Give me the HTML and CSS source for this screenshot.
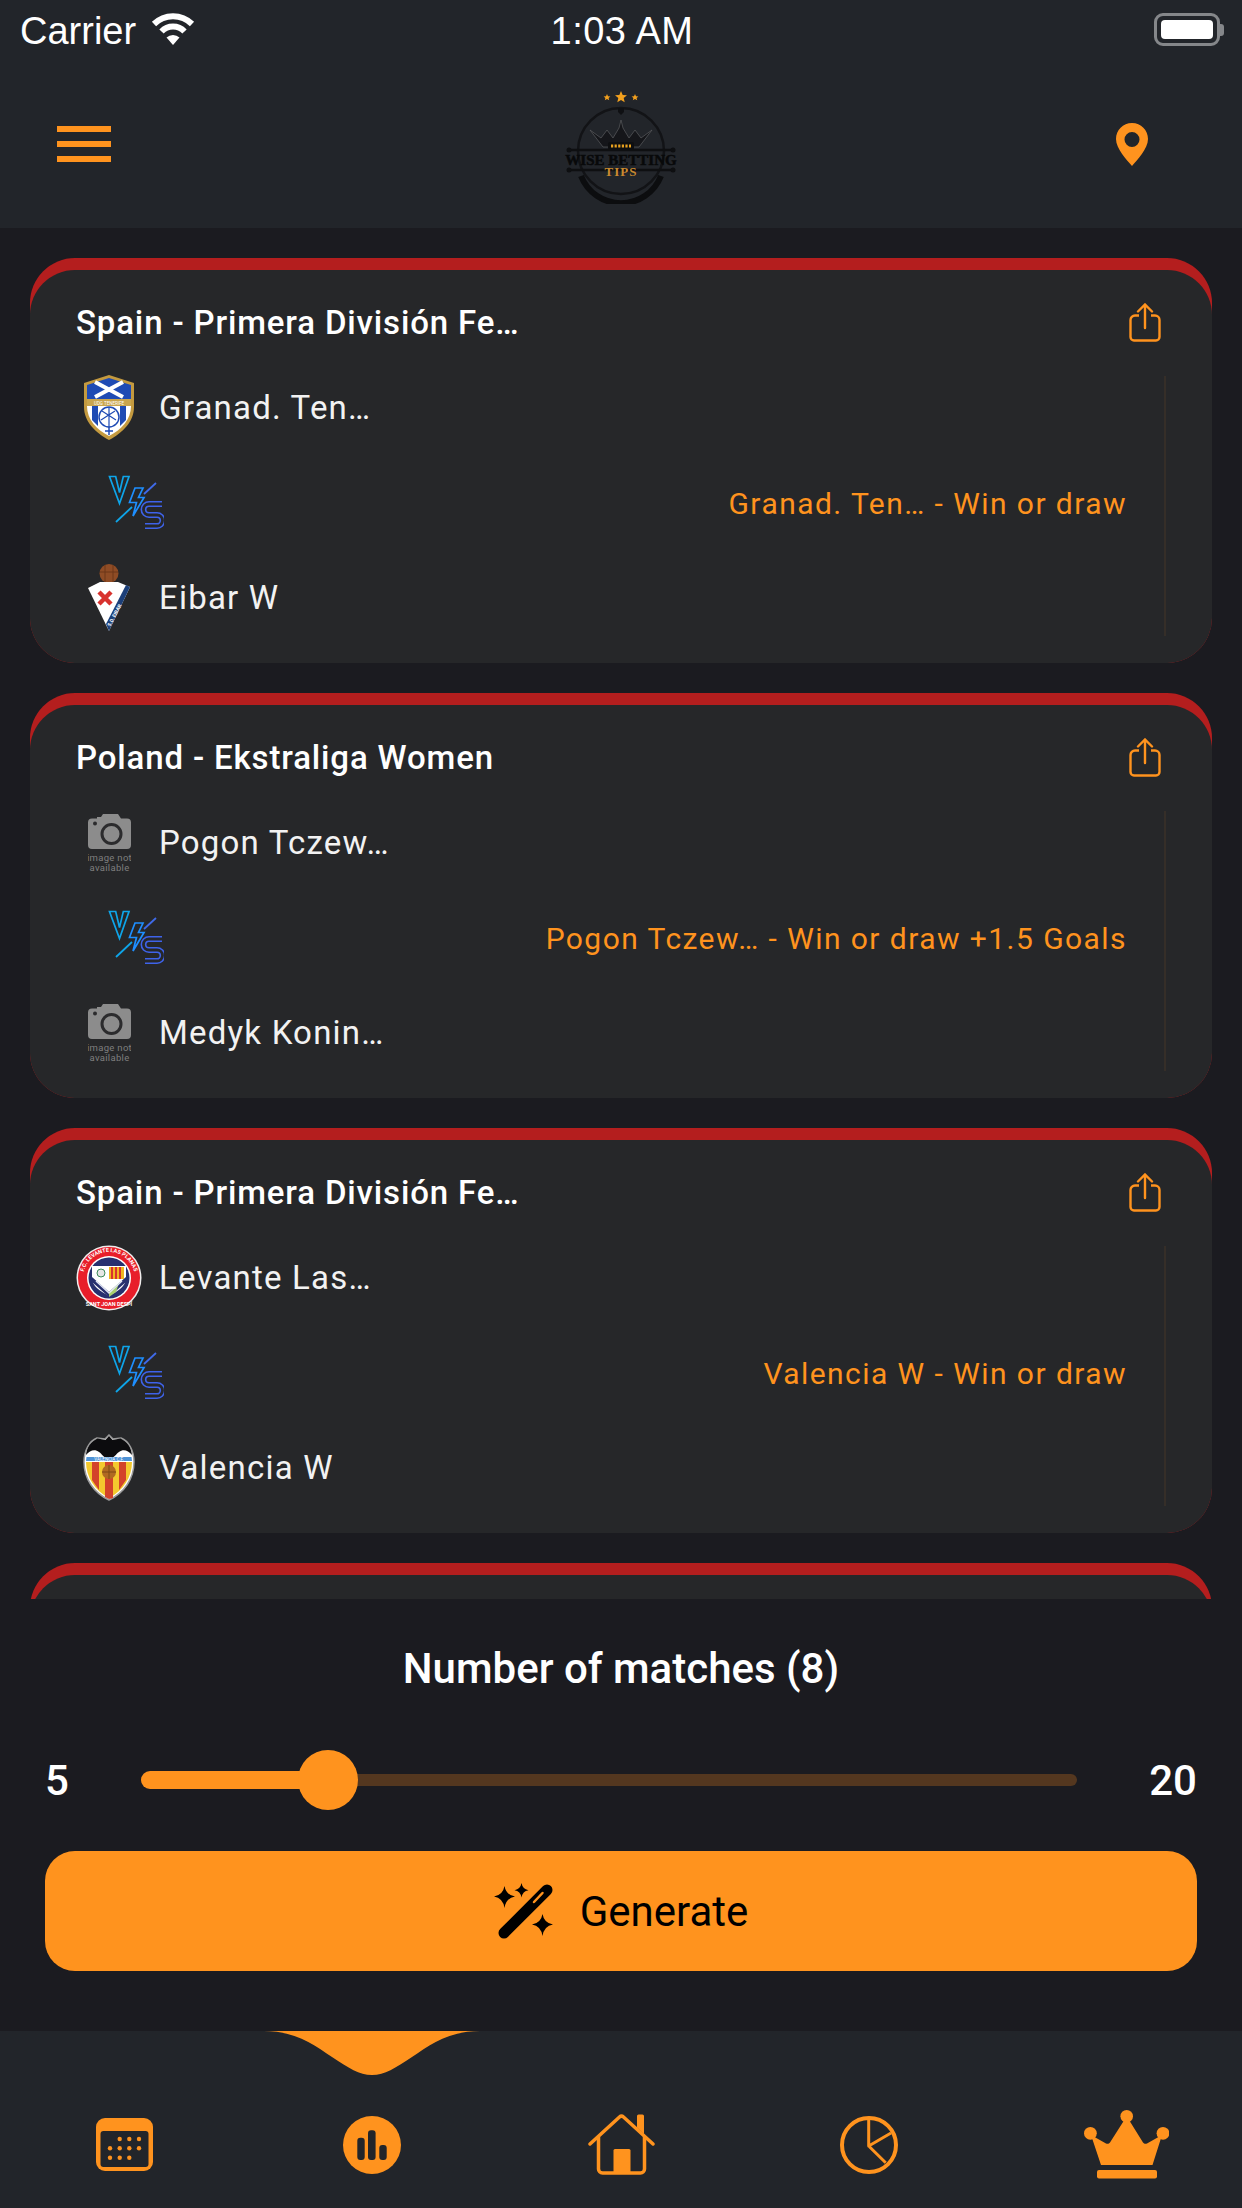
FILE: index.html
```html
<!DOCTYPE html>
<html lang="en">
  <head>
    <meta charset="UTF-8" />
    <meta name="viewport" content="width=device-width, initial-scale=1.0" />
    <title>Wise Betting Tips</title>
    <link rel="stylesheet" href="styles.css">
  </head>
  <body>
    <!-- Shared icons -->
    <svg class="defs" width="0" height="0">
      <symbol id="vs" viewBox="0 0 56 55">
        <path d="M1.500 1.500h6.200l3.800 16 3.800-16h5.700L11.500 28.500z" fill="none" stroke="#0ea5e9" stroke-width="1.700" />
        <path d="M27 13h8l-4.500 9.500h5.500L25 41l3.500-13.500H21.500z" fill="none" stroke="#1e8fff" stroke-width="1.700" />
        <path d="M36 19L48 8" stroke="#3f6ae8" stroke-width="1.800" />
        <path d="M8 47L24 32" stroke="#0ea5e9" stroke-width="1.800" />
        <path d="M54 29H41a5.500 5.500 0 0 0 0 11h8a5.500 5.500 0 0 1 0 11H37" fill="none" stroke="#3e63ea" stroke-width="6" />
        <path d="M54 29H41a5.500 5.500 0 0 0 0 11h8a5.500 5.500 0 0 1 0 11H37" fill="none" stroke="#262729" stroke-width="2.800" />
      </symbol>
      <symbol id="share" viewBox="0 0 32 39">
        <path d="M10 12.500H6a4.500 4.500 0 0 0-4.500 4.500v17A3.500 3.500 0 0 0 5 37.500h22a3.500 3.500 0 0 0 3.500-3.500V17a4.500 4.500 0 0 0-4.500-4.500h-4" fill="none" stroke="#ff931e" stroke-width="2.400" />
        <path d="M16 25V2M9 8.500L16 1.500l7 7" fill="none" stroke="#ff931e" stroke-width="2.400" stroke-linecap="round" />
      </symbol>
      <symbol id="camera" viewBox="0 0 43 36">
        <path d="M4 4.500h5V3h4l2-3h15l3 4.500h6a4 4 0 0 1 4 4V31a4 4 0 0 1-4 4H4a4 4 0 0 1-4-4V8.500a4 4 0 0 1 4-4z" fill="#8c8c8c" />
        <circle cx="23.500" cy="20" r="9.500" fill="#8c8c8c" stroke="#2b2b2d" stroke-width="3" />
        <circle cx="7" cy="9.500" r="2" fill="#2b2b2d" />
      </symbol>
    </svg>

    <header class="top">
      <div class="status-bar">
        <div class="status-left">
          <span>Carrier</span>
          <svg class="wifi" width="44" height="33" viewBox="0 0 44 33">
            <path d="M3 12A27 27 0 0 1 41 12" fill="none" stroke="#fff" stroke-width="6" />
            <path d="M10.500 19.500A16 16 0 0 1 33.500 19.500" fill="none" stroke="#fff" stroke-width="6" />
            <path d="M15.500 25.500A9.500 9.500 0 0 1 28.500 25.500L22 33z" fill="#fff" />
          </svg>
        </div>
        <div class="status-time">1:03 AM</div>
        <div class="battery">
          <div class="battery-body"><div class="battery-level"></div></div>
          <div class="battery-nub"></div>
        </div>
      </div>
      <div class="nav">
        <div class="burger"><span></span><span></span><span></span></div>
        <svg class="logo" width="120" height="120" viewBox="0 0 120 120">
          <path d="M60 7l1.700 4 4.300.3-3.300 2.800 1 4.200-3.700-2.300-3.700 2.300 1-4.200-3.300-2.800 4.300-.3z" fill="#f2a01e" />
          <path d="M46 10l1 2.200 2.400.2-1.800 1.500.6 2.300-2.200-1.200-2.200 1.200.6-2.300-1.800-1.500 2.400-.2zM74 10l1 2.200 2.400.2-1.800 1.500.6 2.300-2.200-1.200-2.200 1.200.6-2.300-1.800-1.500 2.400-.2z" fill="#f2a01e" />
          <circle cx="60" cy="67" r="43" fill="none" stroke="#121316" stroke-width="2.500" />
          <path d="M20 92a43 43 0 0 0 80 0" fill="none" stroke="#0c0d0f" stroke-width="6" />
          <path d="M57 24h6v4l-3 3-3-3z" fill="#0f1013" />
          <path d="M29 46l13 17h36l13-17-11 8-6-8-6 8-6-10-2-8-2 8-6 10-6-8-6 8z" fill="#15161a" stroke="#5a5b5f" stroke-width=".7" />
          <rect x="47" y="58" width="26" height="8" rx="2" fill="#0e0f11" />
          <path d="M50 62h20" stroke="#e8a11f" stroke-width="3" stroke-dasharray="2.200 1.400" />
          <path d="M8 66h104M8 86h104" stroke="#0e0f11" stroke-width="2.500" />
          <circle cx="8" cy="66" r="2.500" fill="#0e0f11" />
          <circle cx="112" cy="66" r="2.500" fill="#0e0f11" />
          <circle cx="8" cy="86" r="2.500" fill="#0e0f11" />
          <circle cx="112" cy="86" r="2.500" fill="#0e0f11" />
          <text class="logo-name" x="60" y="81">WISE BETTING</text>
          <text class="logo-tips" x="60" y="92">TIPS</text>
        </svg>
        <svg class="pin" width="32" height="43" viewBox="0 0 32 43">
          <path fill-rule="evenodd" d="M16 0C7 0 0 7 0 16c0 10 11 21 16 27 5-6 16-17 16-27C32 7 25 0 16 0zm0 9a7.500 7.500 0 1 1 0 15 7.500 7.500 0 0 1 0-15z" fill="#ff931e" />
        </svg>
      </div>
    </header>

    <main class="matches">
      <!-- Match 1 -->
      <section class="card">
        <div class="card-body">
          <div class="card-head">
            <div class="league">Spain - Primera División Fe…</div>
            <svg class="share" width="32" height="39"><use href="#share" /></svg>
          </div>
          <div class="match">
            <div class="teams">
              <div class="team">
                <div class="crest">
                  <svg width="50" height="65" viewBox="0 0 50 65">
                    <path d="M25 0l25 8v24c0 15-12 26-25 33C12 58 0 47 0 32V8z" fill="#c49a3f" />
                    <path d="M25 3L3 10v14h44V10z" fill="#1f4bb4" />
                    <path d="M11 7l28 15M39 7L11 22" stroke="#fff" stroke-width="4" />
                    <path d="M3 24h44v7H3z" fill="#c9a54d" />
                    <text class="crest-text" x="25" y="29.500">UDG TENERIFE</text>
                    <path d="M3 31h44c0 14-10 24-22 30C13 55 3 45 3 31z" fill="#fff" />
                    <path d="M8 31h6v20l-6-6zM36 31h6v14l-6 6z" fill="#1f4bb4" />
                    <circle cx="25" cy="42" r="10" fill="#fff" stroke="#1f4bb4" stroke-width="1.500" />
                    <path d="M25 32v20M18 36l14 9M17 45l14-9" stroke="#1f4bb4" stroke-width="1.200" />
                    <path d="M25 52v8M21 56h8" stroke="#1f4bb4" stroke-width="1.500" />
                  </svg>
                </div>
                <span class="team-name">Granad. Ten…</span>
              </div>
              <div class="team">
                <div class="crest crest-vs"><svg width="56" height="55"><use href="#vs" /></svg></div>
              </div>
              <div class="team">
                <div class="crest">
                  <svg width="43" height="67" viewBox="0 0 43 67">
                    <circle cx="21" cy="9.500" r="9.500" fill="#8f4c25" />
                    <path d="M17 1v17M25 1v17M12 8h18" stroke="#6c3618" stroke-width="1" />
                    <path d="M0 24L12 18h18l12 5-21 44z" fill="#fff" />
                    <path d="M38 21l4 2-21 44-3-7z" fill="#1c3f78" />
                    <path d="M11 28l12 12M23 28L11 40" stroke="#d8322e" stroke-width="4.500" />
                    <text class="crest-text crest-text-eibar" transform="translate(28 52) rotate(-62)">S.D. EIBAR</text>
                  </svg>
                </div>
                <span class="team-name">Eibar W</span>
              </div>
            </div>
            <div class="pick">Granad. Ten… - Win or draw</div>
          </div>
        </div>
      </section>

      <!-- Match 2 -->
      <section class="card">
        <div class="card-body">
          <div class="card-head">
            <div class="league">Poland - Ekstraliga Women</div>
            <svg class="share" width="32" height="39"><use href="#share" /></svg>
          </div>
          <div class="match">
            <div class="teams">
              <div class="team">
                <div class="crest">
                  <svg width="43" height="58" viewBox="0 0 43 58">
                    <use href="#camera" width="43" height="36" />
                    <text class="no-image-text" x="21.500" y="47">image not</text>
                    <text class="no-image-text" x="21.500" y="57">available</text>
                  </svg>
                </div>
                <span class="team-name">Pogon Tczew…</span>
              </div>
              <div class="team">
                <div class="crest crest-vs"><svg width="56" height="55"><use href="#vs" /></svg></div>
              </div>
              <div class="team">
                <div class="crest">
                  <svg width="43" height="58" viewBox="0 0 43 58">
                    <use href="#camera" width="43" height="36" />
                    <text class="no-image-text" x="21.500" y="47">image not</text>
                    <text class="no-image-text" x="21.500" y="57">available</text>
                  </svg>
                </div>
                <span class="team-name">Medyk Konin…</span>
              </div>
            </div>
            <div class="pick">Pogon Tczew… - Win or draw +1.5 Goals</div>
          </div>
        </div>
      </section>

      <!-- Match 3 -->
      <section class="card">
        <div class="card-body">
          <div class="card-head">
            <div class="league">Spain - Primera División Fe…</div>
            <svg class="share" width="32" height="39"><use href="#share" /></svg>
          </div>
          <div class="match">
            <div class="teams">
              <div class="team">
                <div class="crest">
                  <svg width="66" height="66" viewBox="0 0 66 66">
                    <circle cx="33" cy="33" r="32.500" fill="#f0eded" />
                    <circle cx="33" cy="33" r="31" fill="#e81e2a" />
                    <circle cx="33" cy="33" r="22" fill="#fff" />
                    <circle cx="33" cy="33" r="20.500" fill="#27306f" />
                    <path id="levante-arc" d="M7 33a26 26 0 0 1 52 0" fill="none" />
                    <text class="crest-text crest-text-levante"><textPath href="#levante-arc" startOffset="50%">F.C. LEVANTE LAS PLANAS</textPath></text>
                    <text class="crest-text crest-text-levante" x="33" y="61">SANT JOAN DESPÍ</text>
                    <path d="M16 21h34v12c0 8-8 13-17 18-9-5-17-10-17-18z" fill="#fff" />
                    <path d="M33 22h15v12H33z" fill="#f2b51f" />
                    <path d="M36 22v12M40 22v12M44 22v12" stroke="#d8322e" stroke-width="2" />
                    <circle cx="25" cy="28" r="4" fill="#e6e6e6" stroke="#3d8a5a" stroke-width="1" />
                    <path d="M16 32l17 15 17-15v5L33 52 16 37z" fill="#27306f" />
                    <path d="M33 47l10-9-3 9-7 5z" fill="#a7cf6f" />
                    <path d="M20 36l13 12 13-12" fill="none" stroke="#dfe4f2" stroke-width="1.500" />
                  </svg>
                </div>
                <span class="team-name">Levante Las…</span>
              </div>
              <div class="team">
                <div class="crest crest-vs"><svg width="56" height="55"><use href="#vs" /></svg></div>
              </div>
              <div class="team">
                <div class="crest">
                  <svg width="52" height="67" viewBox="0 0 52 67">
                    <path d="M26 1l4 4 8-1c8 3 13 13 13 24 0 17-10 31-25 38C11 59 1 45 1 28 1 17 6 7 14 4l8 1z" fill="#fff" stroke="#9b9b9b" stroke-width="1.500" />
                    <path d="M26 2l3.500 4 8-1.500C44 7 48.500 14 49 21c-4-5-9-6-13-3-3 2-5 6-10 8-5-2-7-6-10-8-4-3-9-2-13 3 .5-7 5-14 11.500-16.500l8 1.500z" fill="#0c0c0e" />
                    <path d="M3.500 23h45l.5 4H3z" fill="#4f93d6" />
                    <text class="crest-text" x="26" y="26.800">VALENCIA C.F.</text>
                    <path d="M3 28h46c0 15-9 29-23 36C12 57 3 43 3 28z" fill="#f4c92e" />
                    <path d="M9 28h7v28l-7-10zM22 28h8v36l-4 1-4-2zM36 28h7v18l-7 10z" fill="#d3432a" />
                    <circle cx="26" cy="38" r="7" fill="#b06a22" />
                    <path d="M19 38h14M26 31v14" stroke="#7f4814" stroke-width="1" />
                  </svg>
                </div>
                <span class="team-name">Valencia W</span>
              </div>
            </div>
            <div class="pick">Valencia W - Win or draw</div>
          </div>
        </div>
      </section>

      <!-- Match 4, cut off by the panel -->
      <section class="card">
        <div class="card-body"></div>
      </section>
    </main>

    <section class="generator">
      <h2 class="generator-title">Number of matches (8)</h2>
      <div class="slider">
        <span class="slider-min">5</span>
        <div class="track">
          <div class="track-fill" style="width: 20%"></div>
          <div class="track-thumb" style="left: 20%"></div>
        </div>
        <span class="slider-max">20</span>
      </div>
      <button class="generate">
        <svg width="59" height="56" viewBox="0 0 59 56">
          <path d="M10 50L53 7" stroke="#000" stroke-width="11" stroke-linecap="round" />
          <path d="M40 19l8.500-9" stroke="#ff931e" stroke-width="2.500" stroke-linecap="round" />
          <path d="M10.500 3q1.500 9 10.500 10.500Q12 15 10.500 25 9 15 0 13.500 9 12 10.500 3zM27.500 0q1 6 7 7.200-6 1-7 7.300-1-6.300-7-7.300 6-1.200 7-7.200zM48.500 31q1.500 9 10.500 10.500Q50 43 48.500 53 47 43 38 41.500 47 40 48.500 31z" fill="#000" />
        </svg>
        <span>Generate</span>
      </button>
    </section>

    <nav class="tabs">
      <svg class="tab-bump" width="216" height="44" viewBox="0 0 216 44">
        <path d="M0 0c32 0 50 14 68 26 17 11 27 18 40 18s23-7 40-18C166 14 184 0 216 0z" fill="#ff931e" />
      </svg>
      <svg width="57" height="53" viewBox="0 0 57 53">
        <rect width="57" height="53" rx="9" fill="#ff931e" />
        <rect x="4.500" y="13" width="48" height="36" rx="3" fill="#22252a" />
        <g fill="#ff931e">
          <circle cx="23.700" cy="21" r="2.200" /><circle cx="33.300" cy="21" r="2.200" /><circle cx="43" cy="21" r="2.200" />
          <circle cx="14" cy="30.300" r="2.200" /><circle cx="23.700" cy="30.300" r="2.200" /><circle cx="33.300" cy="30.300" r="2.200" /><circle cx="43" cy="30.300" r="2.200" />
          <circle cx="14" cy="39.700" r="2.200" /><circle cx="23.700" cy="39.700" r="2.200" /><circle cx="33.300" cy="39.700" r="2.200" />
        </g>
      </svg>
      <svg width="58" height="58" viewBox="0 0 58 58">
        <circle cx="29" cy="29" r="29" fill="#ff931e" />
        <rect x="14.300" y="21.700" width="7.400" height="22.300" rx="3" fill="#22252a" />
        <rect x="25" y="14.300" width="7.600" height="29.700" rx="3" fill="#22252a" />
        <rect x="36.300" y="29" width="7.400" height="15" rx="3" fill="#22252a" />
      </svg>
      <svg width="67" height="61" viewBox="0 0 67 61">
        <path d="M2 30L31.500 3a3 3 0 0 1 4 0L65 30" fill="none" stroke="#ff931e" stroke-width="3.500" stroke-linecap="round" />
        <path d="M10.500 23v32a4 4 0 0 0 4 4h38a4 4 0 0 0 4-4V23" fill="none" stroke="#ff931e" stroke-width="3.500" />
        <path d="M27 35h14a1.500 1.500 0 0 1 1.500 1.500V58h-17V36.500A1.500 1.500 0 0 1 27 35z" fill="#ff931e" />
        <path d="M49 2a1.500 1.500 0 0 1 1.500-1.500h4A1.500 1.500 0 0 1 56 2v18l-7-6.500z" fill="#ff931e" />
      </svg>
      <svg width="58" height="58" viewBox="0 0 58 58">
        <circle cx="29" cy="29" r="27" fill="none" stroke="#ff931e" stroke-width="4" />
        <path d="M28.700 2.500V30L51 17M28.700 30L45.700 46.700" fill="none" stroke="#ff931e" stroke-width="3" stroke-linejoin="round" />
      </svg>
      <svg width="85" height="69" viewBox="0 0 85 69">
        <circle cx="42.700" cy="6.300" r="6.300" fill="#ff931e" />
        <circle cx="6.400" cy="23.300" r="6.400" fill="#ff931e" />
        <circle cx="79" cy="23.300" r="6.400" fill="#ff931e" />
        <path d="M7 25l15 8.500c1.500.7 3 .3 4-1L42.700 6.300 59 32.500c1 1.300 2.500 1.700 4 1L78 25l-9.500 30H17z" fill="#ff931e" />
        <rect x="13" y="60" width="60" height="8.500" rx="2" fill="#ff931e" />
      </svg>
    </nav>
  </body>
</html>
```

FILE: styles.css
```css
/* Page */
* {
  box-sizing: border-box;
}
body {
  display: flex;
  flex-direction: column;
  width: 1242px;
  height: 2208px;
  margin: 0;
  overflow: hidden;
  font-family: Roboto, sans-serif;
  background-color: #1b1b20;
  color: #fff;
}
.defs {
  position: absolute;
}
svg {
  display: block;
  flex: none;
}

/* Status bar and top nav */
.top {
  height: 228px;
  background-color: #22252a;
}
.status-bar {
  display: grid;
  grid-template-columns: 1fr auto 1fr;
  align-items: center;
  height: 60px;
  padding: 2px 18px 0 20px;
  font-family: "Liberation Sans", sans-serif;
  font-size: 38px;
}
.status-left {
  display: flex;
  align-items: center;
  gap: 15px;
}
.status-time {
  letter-spacing: 0.5px;
}
.wifi {
  margin-top: -6px;
}
.battery {
  display: flex;
  align-items: center;
  justify-self: end;
  margin-top: -3px;
}
.battery-body {
  width: 66px;
  height: 33px;
  padding: 4px;
  border: 3px solid #85878a;
  border-radius: 9px;
}
.battery-level {
  height: 100%;
  background-color: #fff;
  border-radius: 4px;
}
.battery-nub {
  width: 4px;
  height: 12px;
  background-color: #85878a;
  border-radius: 0 3px 3px 0;
}
.nav {
  display: grid;
  grid-template-columns: 1fr auto 1fr;
  align-items: center;
  height: 168px;
  padding: 0 57px;
}
.burger {
  display: flex;
  flex-direction: column;
  gap: 9px;
  width: 54px;
}
.burger span {
  height: 6px;
  background-color: #ff931e;
}
.pin {
  justify-self: end;
  margin-right: 37px;
}
.logo-name {
  font-family: "Liberation Serif", serif;
  font-size: 15px;
  font-weight: bold;
  text-anchor: middle;
  fill: #08090a;
  stroke: #08090a;
  stroke-width: 0.5px;
}
.logo-tips {
  font-family: "Liberation Serif", serif;
  font-size: 13px;
  font-weight: bold;
  letter-spacing: 1px;
  text-anchor: middle;
  fill: #c98a2f;
}

/* Match cards */
.matches {
  flex: 1;
  min-height: 0;
  overflow: hidden;
  display: flex;
  flex-direction: column;
  gap: 30px;
  padding: 30px 30px 0;
}
.card {
  flex: none;
  height: 405px;
  padding-top: 12px;
  background-color: #b41e1e;
  border-radius: 45px;
}
.card-body {
  height: 393px;
  padding: 0 46px 18px;
  background-color: #262729;
  border-radius: 45px;
}
.card-head {
  display: flex;
  justify-content: space-between;
  align-items: center;
  height: 90px;
  padding: 14px 5px 0 0;
}
.league {
  font-size: 33px;
  font-weight: 500;
  letter-spacing: 0.85px;
}
.match {
  display: flex;
}
.team {
  display: flex;
  align-items: center;
  gap: 18px;
  height: 95px;
}
.crest {
  display: flex;
  justify-content: center;
  align-items: center;
  width: 66px;
}
.crest-vs {
  justify-content: flex-start;
  padding-left: 32px;
}
.team-name {
  margin-left: -1px;
  font-size: 33px;
  letter-spacing: 1.2px;
  color: #f2f2f2;
}
.pick {
  flex: 1;
  display: flex;
  justify-content: flex-end;
  align-items: center;
  margin: 16px 0 9px;
  padding: 0 37px 6px 0;
  border-right: 2px solid #352e28;
  font-size: 30px;
  letter-spacing: 1.44px;
  color: #ff931e;
}
.crest-text {
  font-family: Roboto, sans-serif;
  font-size: 4.500px;
  text-anchor: middle;
  fill: #fff;
}
.crest-text-eibar {
  font-size: 5px;
  font-weight: bold;
}
.crest-text-levante {
  font-size: 5.500px;
  font-weight: bold;
}
.no-image-text {
  font-family: Roboto, sans-serif;
  font-size: 9.500px;
  letter-spacing: 0.3px;
  text-anchor: middle;
  fill: #7f7f7f;
}

/* Number of matches panel */
.generator {
  height: 432px;
  padding: 0 45px;
  background-color: #1b1b20;
}
.generator-title {
  margin: 0;
  padding-top: 46px;
  font-size: 42px;
  line-height: 48px;
  font-weight: 500;
  text-align: center;
}
.slider {
  display: flex;
  align-items: center;
  height: 60px;
  margin-top: 57px;
  font-size: 42px;
  font-weight: 500;
}
.slider-min {
  width: 96px;
}
.slider-max {
  width: 120px;
  text-align: right;
}
.track {
  position: relative;
  flex: 1;
  height: 12px;
  background-color: #54371f;
  border-radius: 6px;
}
.track-fill {
  position: relative;
  top: -3px;
  height: 18px;
  background-color: #ff931e;
  border-radius: 9px;
}
.track-thumb {
  position: absolute;
  top: -24px;
  width: 60px;
  height: 60px;
  margin-left: -30px;
  background-color: #ff931e;
  border-radius: 50%;
}
.generate {
  display: flex;
  justify-content: center;
  align-items: center;
  gap: 27px;
  width: 100%;
  height: 120px;
  margin-top: 41px;
  background-color: #ff931e;
  border: none;
  border-radius: 30px;
  font-family: Roboto, sans-serif;
  font-size: 42px;
  color: #000;
}

/* Bottom tabs */
.tabs {
  position: relative;
  display: grid;
  grid-template-columns: 247px 245px 252px 244px auto;
  justify-content: start;
  align-items: center;
  height: 177px;
  padding: 50px 0 0 96px;
  background-color: #22252a;
}
.tab-bump {
  position: absolute;
  top: 0;
  left: 264px;
}
```
